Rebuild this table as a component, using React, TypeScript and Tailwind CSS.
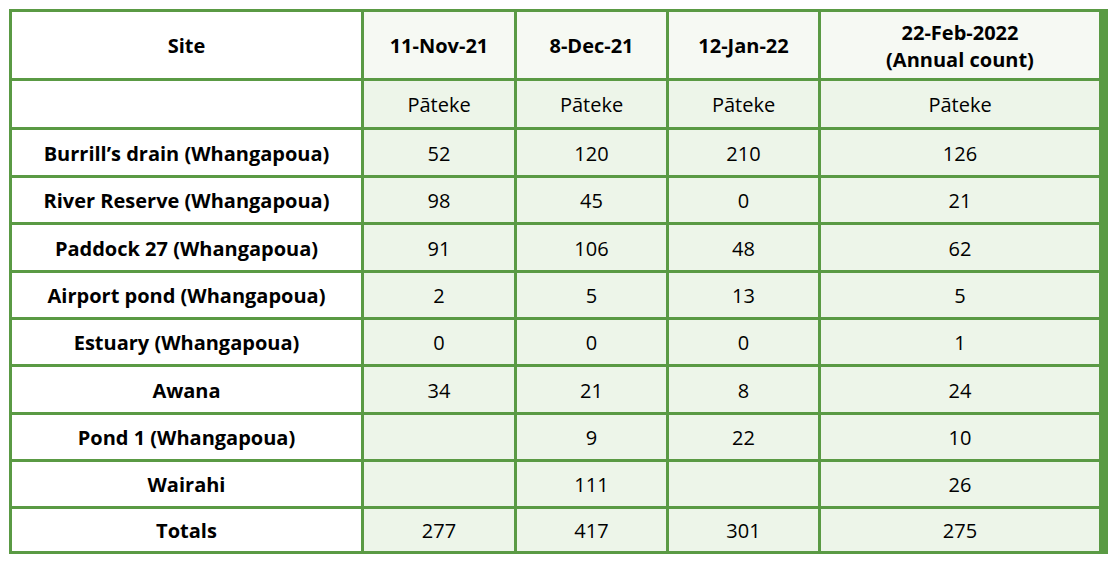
const dates = ["11-Nov-21", "8-Dec-21", "12-Jan-22"];

const rows: [string, string, string, string, string][] = [
  ["Burrill’s drain (Whangapoua)", "52", "120", "210", "126"],
  ["River Reserve (Whangapoua)", "98", "45", "0", "21"],
  ["Paddock 27 (Whangapoua)", "91", "106", "48", "62"],
  ["Airport pond (Whangapoua)", "2", "5", "13", "5"],
  ["Estuary (Whangapoua)", "0", "0", "0", "1"],
  ["Awana", "34", "21", "8", "24"],
  ["Pond 1 (Whangapoua)", "", "9", "22", "10"],
  ["Wairahi", "", "111", "", "26"],
  ["Totals", "277", "417", "301", "275"],
];

const rowHeights = ["h-[45px]", "h-[44px]", "h-[45px]", "h-[44px]", "h-[44px]", "h-[45px]", "h-[44px]", "h-[44px]", "h-[42px]"];

const cell = "flex items-center justify-center text-center pt-[2px]";

export default function App() {
  return (
    <div className="h-[564px] w-[1112px] bg-white pl-[9px] pt-[9px] font-['Open_Sans',sans-serif] text-[20px] text-black">
      <div className="grid w-[1093px] grid-cols-[349px_150px_149px_149px_278px] gap-[3px] border-[3px] border-[#5a9a44] bg-[#5a9a44] box-content">
        <div className={`${cell} h-[66px] bg-white font-bold`}>Site</div>
        {dates.map((d) => (
          <div key={d} className={`${cell} bg-[#f6f9f3] font-bold`}>
            {d}
          </div>
        ))}
        <div className={`${cell} flex-col bg-[#f6f9f3] font-bold leading-[27px]`}>
          <span>22-Feb-2022</span>
          <span>(Annual count)</span>
        </div>

        <div className="h-[46px] bg-white" />
        {[0, 1, 2, 3].map((i) => (
          <div key={i} className={`${cell} bg-[#edf5e9]`}>
            Pāteke
          </div>
        ))}

        {rows.map((r, ri) => (
          <Row key={r[0]} data={r} height={rowHeights[ri]} />
        ))}
      </div>
    </div>
  );
}

function Row({ data, height }: { data: string[]; height: string }) {
  const [site, ...values] = data;
  return (
    <>
      <div className={`${cell} ${height} bg-white font-bold`}>{site}</div>
      {values.map((v, i) => (
        <div key={i} className={`${cell} bg-[#edf5e9]`}>
          {v}
        </div>
      ))}
    </>
  );
}
